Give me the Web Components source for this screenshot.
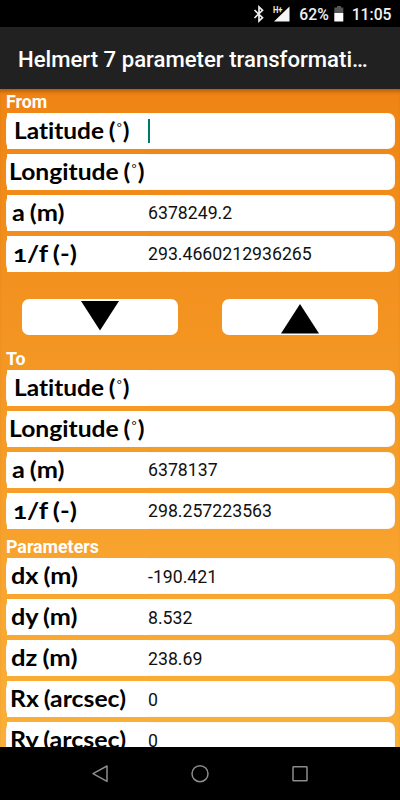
<!DOCTYPE html>
<html lang="en">
<head>
<meta charset="utf-8">
<title>Helmert 7 parameter transformation</title>
<style>
  body {
    margin: 0;
    font-family: Roboto, sans-serif;
    color: #111;
  }
</style>
</head>
<body>
<helmert-app>
  <status-bar slot="status" battery="62%" time="11:05"></status-bar>
  <title-bar slot="title">Helmert 7 parameter transformati…</title-bar>

  <param-section heading="From">
    <param-field label="Latitude (°)" inset="14.5" width="115.5" focused></param-field>
    <param-field label="Longitude (°)" inset="9.5" width="135.5"></param-field>
    <param-field label="a (m)" inset="13" width="53">6378249.2</param-field>
    <param-field label="1/f (-)" inset="14" width="64">293.4660212936265</param-field>
  </param-section>

  <transform-buttons></transform-buttons>

  <param-section heading="To">
    <param-field label="Latitude (°)" inset="14.5" width="115.5"></param-field>
    <param-field label="Longitude (°)" inset="9.5" width="135.5"></param-field>
    <param-field label="a (m)" inset="13" width="53">6378137</param-field>
    <param-field label="1/f (-)" inset="14" width="64">298.257223563</param-field>
  </param-section>

  <param-section heading="Parameters" style="margin-top: 5px; --value-shift: 1px">
    <param-field label="dx (m)" inset="11.5" width="66.5">-190.421</param-field>
    <param-field label="dy (m)" inset="11.5" width="66.5">8.532</param-field>
    <param-field label="dz (m)" inset="11.5" width="66.5">238.69</param-field>
    <param-field label="Rx (arcsec)" inset="11" width="116">0</param-field>
    <param-field label="Ry (arcsec)" inset="11" width="116">0</param-field>
  </param-section>

  <nav-bar slot="nav"></nav-bar>
</helmert-app>

<script>
// Phone screen: fixed bars at top and bottom, clipped form in between.
class HelmertApp extends HTMLElement {
  constructor() {
    super();
    this.attachShadow({ mode: "open" }).innerHTML = `
      <style>
        :host {
          display: flex;
          flex-direction: column;
          width: 400px;
          height: 800px;
          overflow: hidden;
          background: #000;
        }
        main {
          flex: 1;
          min-height: 0;
          overflow: hidden;
          background: linear-gradient(#ef8414, #fbb038);
          box-shadow: inset 0 5px 4px -3px rgba(80, 35, 0, 0.45);
        }
      </style>
      <slot name="status"></slot>
      <slot name="title"></slot>
      <main><slot></slot></main>
      <slot name="nav"></slot>
    `;
  }
}

class StatusBar extends HTMLElement {
  connectedCallback() {
    this.attachShadow({ mode: "open" }).innerHTML = `
      <style>
        :host {
          display: flex;
          flex: none;
          align-items: center;
          justify-content: flex-end;
          box-sizing: border-box;
          height: 27px;
          padding: 1px 8.5px 0 0;
          background: #000;
          color: #f2f2f2;
          font-size: 15.7px;
          font-weight: 500;
          line-height: 27px;
        }
        svg { display: block; flex: none; }
        .signal { margin-left: 8px; }
        .percent { margin-left: 9px; }
        .battery { margin-left: 5px; }
        .time { margin-left: 8px; }
      </style>
      <svg width="12" height="18" viewBox="0 0 12 18" fill="none" stroke="#eee" stroke-width="1.7">
        <path d="M1.5 5 L9.5 12.7 L6 16 V2 L9.5 5.3 L1.5 13"/>
      </svg>
      <svg class="signal" width="17" height="18" viewBox="0 0 17 18">
        <path d="M16.5 1.5 V16.5 H1 Z" fill="#f5f5f5"/>
        <path d="M0 0 H9.5 V7 L7 9 H0 Z" fill="#000"/>
        <text x="0" y="7.5" font-size="9" font-weight="700" fill="#eee" textLength="9.5" lengthAdjust="spacingAndGlyphs">H+</text>
      </svg>
      <span class="percent">${this.getAttribute("battery")}</span>
      <svg class="battery" width="10" height="18" viewBox="0 0 10 18">
        <path d="M3 1 H7 V2.5 H9.3 V8 H.3 V2.5 H3 Z" fill="#555"/>
        <path d="M.3 8 H9.3 V16.5 H.3 Z" fill="#fff"/>
      </svg>
      <span class="time">${this.getAttribute("time")}</span>
    `;
  }
}

class TitleBar extends HTMLElement {
  constructor() {
    super();
    this.attachShadow({ mode: "open" }).innerHTML = `
      <style>
        :host {
          display: flex;
          flex: none;
          align-items: center;
          box-sizing: border-box;
          height: 62px;
          padding: 2px 18px 0;
          background: #212121;
          color: #fff;
          font-size: 22.15px;
          font-weight: 500;
          white-space: nowrap;
        }
      </style>
      <slot></slot>
    `;
  }
}

class ParamSection extends HTMLElement {
  connectedCallback() {
    this.attachShadow({ mode: "open" }).innerHTML = `
      <style>
        :host { display: block; padding: 0 5px 0 5.5px; }
        h2 {
          margin: 0;
          padding: 2px 0 0 0.5px;
          height: 22px;
          font-size: 17.8px;
          font-weight: 700;
          line-height: 22px;
          color: #fff;
        }
        .rows { display: grid; gap: 5px; }
      </style>
      <h2>${this.getAttribute("heading")}</h2>
      <div class="rows"><slot></slot></div>
    `;
  }
}

// One labelled value. The label is stretched to `width` and starts at
// `inset` from the left edge of the screen.
class ParamField extends HTMLElement {
  connectedCallback() {
    const label = this.getAttribute("label");
    const [before, after] = label.split("°");
    const text = after === undefined ? label : `${before}<i>°</i>${after}`;
    this.attachShadow({ mode: "open" }).innerHTML = `
      <style>
        :host {
          display: flex;
          align-items: stretch;
          box-sizing: border-box;
          height: 36px;
          border-radius: 7px;
          padding-left: 1.5px;
          background: #fff;
          box-shadow: inset 0 0 1px rgba(170, 90, 40, 0.4);
        }
        .label {
          flex: none;
          box-sizing: border-box;
          width: 141px;
          background: #fff;
          color: #000;
          font: 700 22px/36px Lato, sans-serif;
          font-feature-settings: "onum";
          font-variant-ligatures: none;
          word-spacing: -1px;
          white-space: nowrap;
        }
        .label span { display: inline-block; transform-origin: 0 50%; }
        i {
          margin: 0 1px;
          font: 400 11px/1 Lato, sans-serif;
          vertical-align: 7px;
        }
        .value {
          display: flex;
          align-items: center;
          font-size: 17.7px;
          padding-top: var(--value-shift, 0);
        }
        .caret { width: 2px; height: 24px; background: #00796b; }
      </style>
      <div class="label"><span>${text}</span></div>
      <div class="value">${this.hasAttribute("focused") ? '<b class="caret"></b>' : ""}<slot></slot></div>
    `;
    const box = this.shadowRoot.querySelector(".label");
    const span = box.firstElementChild;
    box.style.paddingLeft = `${this.getAttribute("inset") - 8}px`;
    span.style.transform = `scaleX(${this.getAttribute("width") / span.offsetWidth})`;
  }
}

class TransformButtons extends HTMLElement {
  constructor() {
    super();
    this.attachShadow({ mode: "open" }).innerHTML = `
      <style>
        :host {
          display: grid;
          grid-template-columns: 156px 156px;
          justify-content: center;
          gap: 44px;
          padding: 27px 0 11px;
        }
        button {
          display: grid;
          justify-items: center;
          height: 36px;
          padding: 0;
          border: 0;
          border-radius: 7px;
          background: #fff;
        }
        svg { display: block; }
      </style>
      <button aria-label="Down"><svg width="38" height="36"><path d="M0 2 H38 L19 31.5 Z"/></svg></button>
      <button aria-label="Up"><svg width="38" height="36"><path d="M19 5 L38 34.5 H0 Z"/></svg></button>
    `;
  }
}

class NavBar extends HTMLElement {
  constructor() {
    super();
    this.attachShadow({ mode: "open" }).innerHTML = `
      <style>
        :host {
          display: flex;
          flex: none;
          align-items: center;
          justify-content: center;
          gap: 80px;
          height: 53px;
          background: #000;
        }
        svg { fill: none; stroke: #8c8c8c; stroke-width: 1.5; }
      </style>
      <svg width="20" height="20"><path d="M3 9.7 L17 2 V17.4 Z" stroke-linejoin="round"/></svg>
      <svg width="20" height="20"><circle cx="10" cy="9.7" r="8"/></svg>
      <svg width="20" height="20"><rect x="3" y="2.7" width="14" height="14" rx=".5"/></svg>
    `;
  }
}

customElements.define("helmert-app", HelmertApp);
customElements.define("status-bar", StatusBar);
customElements.define("title-bar", TitleBar);
customElements.define("param-section", ParamSection);
customElements.define("param-field", ParamField);
customElements.define("transform-buttons", TransformButtons);
customElements.define("nav-bar", NavBar);
</script>
</body>
</html>
